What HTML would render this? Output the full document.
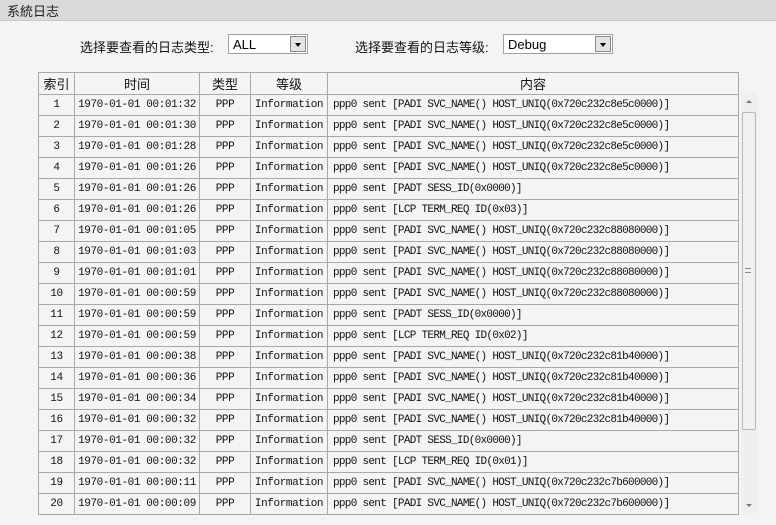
<!DOCTYPE html>
<html><head><meta charset="utf-8"><style>
*{margin:0;padding:0;box-sizing:border-box}
body{width:776px;height:525px;background:#f4f4f4;font-family:"Liberation Sans","Noto Sans CJK SC",sans-serif;position:relative;overflow:hidden}
.hd{position:absolute;left:0;top:0;width:776px;height:21px;background:#dadada;border-bottom:1px solid #c8c8c8;font-size:13px;padding:1px 0 0 7px;color:#222}
.lb{position:absolute;font-size:13px;color:#111;top:37px}
.sel{position:absolute;top:34px;height:20px;background:#fff;border:1px solid #a0a0a0;font-size:13px;padding:2px 0 0 4px}
.sel .b{position:absolute;right:1px;top:1px;width:16px;height:16px;background:#e4e4e4;border:1px solid #888}
.sel .b:after{content:"";position:absolute;left:4px;top:6px;border-left:3px solid transparent;border-right:3px solid transparent;border-top:4px solid #000}
table{position:absolute;left:38px;top:72px;border-collapse:collapse;width:701px;table-layout:fixed}
td,th{border:1px solid #a8a8a8;height:21px;font-size:11px;text-align:center;font-family:"Liberation Mono","Noto Serif CJK SC",monospace;color:#111;white-space:nowrap;overflow:hidden;font-weight:normal;letter-spacing:-0.4px}
th{font-family:"Liberation Sans","Noto Sans CJK SC",sans-serif;font-size:13px;height:22px;letter-spacing:0}
td.c{text-align:left;padding-left:5px;letter-spacing:-0.7px}
.sb{position:absolute;left:741px;top:93px;width:16px;height:420px;background:#efefef}
.th{position:absolute;left:742px;top:112px;width:14px;height:318px;background:#f0f0f0;border:1px solid #b8b8b8;border-radius:2px}
</style></head><body>
<div class="hd">系統日志</div>
<div class="lb" style="left:80px">选择要查看的日志类型:</div>
<div class="sel" style="left:228px;width:80px">ALL<div class="b"></div></div>
<div class="lb" style="left:355px">选择要查看的日志等级:</div>
<div class="sel" style="left:503px;width:110px">Debug<div class="b"></div></div>
<table>
<colgroup><col style="width:36px"><col style="width:125px"><col style="width:51px"><col style="width:77px"><col></colgroup>
<tr><th>索引</th><th>时间</th><th>类型</th><th>等级</th><th>内容</th></tr>
<tr><td>1</td><td>1970-01-01 00:01:32</td><td>PPP</td><td>Information</td><td class="c">ppp0 sent [PADI SVC_NAME() HOST_UNIQ(0x720c232c8e5c0000)]</td></tr>
<tr><td>2</td><td>1970-01-01 00:01:30</td><td>PPP</td><td>Information</td><td class="c">ppp0 sent [PADI SVC_NAME() HOST_UNIQ(0x720c232c8e5c0000)]</td></tr>
<tr><td>3</td><td>1970-01-01 00:01:28</td><td>PPP</td><td>Information</td><td class="c">ppp0 sent [PADI SVC_NAME() HOST_UNIQ(0x720c232c8e5c0000)]</td></tr>
<tr><td>4</td><td>1970-01-01 00:01:26</td><td>PPP</td><td>Information</td><td class="c">ppp0 sent [PADI SVC_NAME() HOST_UNIQ(0x720c232c8e5c0000)]</td></tr>
<tr><td>5</td><td>1970-01-01 00:01:26</td><td>PPP</td><td>Information</td><td class="c">ppp0 sent [PADT SESS_ID(0x0000)]</td></tr>
<tr><td>6</td><td>1970-01-01 00:01:26</td><td>PPP</td><td>Information</td><td class="c">ppp0 sent [LCP TERM_REQ ID(0x03)]</td></tr>
<tr><td>7</td><td>1970-01-01 00:01:05</td><td>PPP</td><td>Information</td><td class="c">ppp0 sent [PADI SVC_NAME() HOST_UNIQ(0x720c232c88080000)]</td></tr>
<tr><td>8</td><td>1970-01-01 00:01:03</td><td>PPP</td><td>Information</td><td class="c">ppp0 sent [PADI SVC_NAME() HOST_UNIQ(0x720c232c88080000)]</td></tr>
<tr><td>9</td><td>1970-01-01 00:01:01</td><td>PPP</td><td>Information</td><td class="c">ppp0 sent [PADI SVC_NAME() HOST_UNIQ(0x720c232c88080000)]</td></tr>
<tr><td>10</td><td>1970-01-01 00:00:59</td><td>PPP</td><td>Information</td><td class="c">ppp0 sent [PADI SVC_NAME() HOST_UNIQ(0x720c232c88080000)]</td></tr>
<tr><td>11</td><td>1970-01-01 00:00:59</td><td>PPP</td><td>Information</td><td class="c">ppp0 sent [PADT SESS_ID(0x0000)]</td></tr>
<tr><td>12</td><td>1970-01-01 00:00:59</td><td>PPP</td><td>Information</td><td class="c">ppp0 sent [LCP TERM_REQ ID(0x02)]</td></tr>
<tr><td>13</td><td>1970-01-01 00:00:38</td><td>PPP</td><td>Information</td><td class="c">ppp0 sent [PADI SVC_NAME() HOST_UNIQ(0x720c232c81b40000)]</td></tr>
<tr><td>14</td><td>1970-01-01 00:00:36</td><td>PPP</td><td>Information</td><td class="c">ppp0 sent [PADI SVC_NAME() HOST_UNIQ(0x720c232c81b40000)]</td></tr>
<tr><td>15</td><td>1970-01-01 00:00:34</td><td>PPP</td><td>Information</td><td class="c">ppp0 sent [PADI SVC_NAME() HOST_UNIQ(0x720c232c81b40000)]</td></tr>
<tr><td>16</td><td>1970-01-01 00:00:32</td><td>PPP</td><td>Information</td><td class="c">ppp0 sent [PADI SVC_NAME() HOST_UNIQ(0x720c232c81b40000)]</td></tr>
<tr><td>17</td><td>1970-01-01 00:00:32</td><td>PPP</td><td>Information</td><td class="c">ppp0 sent [PADT SESS_ID(0x0000)]</td></tr>
<tr><td>18</td><td>1970-01-01 00:00:32</td><td>PPP</td><td>Information</td><td class="c">ppp0 sent [LCP TERM_REQ ID(0x01)]</td></tr>
<tr><td>19</td><td>1970-01-01 00:00:11</td><td>PPP</td><td>Information</td><td class="c">ppp0 sent [PADI SVC_NAME() HOST_UNIQ(0x720c232c7b600000)]</td></tr>
<tr><td>20</td><td>1970-01-01 00:00:09</td><td>PPP</td><td>Information</td><td class="c">ppp0 sent [PADI SVC_NAME() HOST_UNIQ(0x720c232c7b600000)]</td></tr>
</table>
<div class="sb"></div>
<div class="th"></div>
<div style="position:absolute;left:746px;top:100px;border-left:3px solid transparent;border-right:3px solid transparent;border-bottom:3px solid #777"></div>
<div style="position:absolute;left:746px;top:504px;border-left:3px solid transparent;border-right:3px solid transparent;border-top:3px solid #777"></div>
<div style="position:absolute;left:745px;top:268px;width:6px;height:5px;border-top:1px solid #888;border-bottom:1px solid #888"></div>
</body></html>
